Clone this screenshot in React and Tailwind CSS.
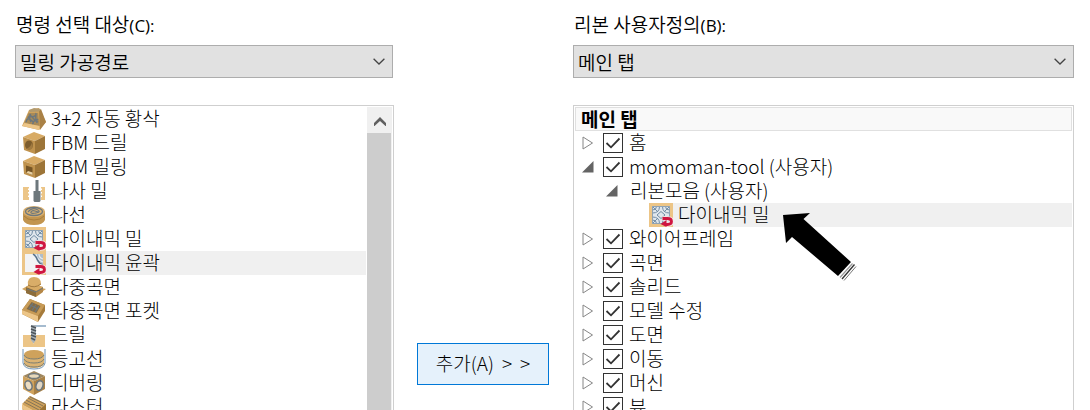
import { useState } from "react";

const TAN = "#cfa25c";
const LIGHT = "#ecc587";
const DARK = "#9c7434";
const STEEL = "#6d777c";

function RedArrow() {
  return (
    <g>
      <path d="M13.500 15.500h5q4 0 4 3t-4 3h-2" fill="none" stroke="#f6e4e4" strokeWidth="4.500" />
      <path d="M13.500 15.500h5q4 0 4 3t-4 3h-2" fill="none" stroke="#cf1640" strokeWidth="2.800" />
      <path d="M17.500 17v7L11.500 21z" fill="#cf1640" />
    </g>
  );
}

const shapes = {
  auto: (
    <g>
      <path d="M7 3l10-2 7 14-7 8-17-4z" fill={TAN} />
      <path d="M17 4l2-2 5 13-6 8z" fill="#a98146" />
      <path d="M7 3l5-2 7 1-2 2.500-9 .5z" fill="#b39a6d" />
      <path d="M6.500 6l9.500 0 1.500 13-15-3z" fill="#a98a57" />
      <path d="M8 7q1 5 6 1M6 11q2-4 5 0t5 1M4 15q1-5 5-2t1 4M11 17q0-5 5-2M8 8q-1 4 1 7M14 6q-1 5 1 10" fill="none" stroke={STEEL} strokeWidth="1.400" />
      <path d="M0 19l2.500-3 15 3v4z" fill={LIGHT} />
    </g>
  ),
  fbmDrill: (
    <g>
      <path d="M1 6l11-5 11 4-10 5z" fill="#d8ab65" />
      <path d="M1 6l12 4v13L2 19z" fill="#bf924d" />
      <path d="M13 10l10-5v13l-10 5z" fill="#9d7538" />
      <ellipse cx="7" cy="14" rx="4" ry="4.600" fill="#7d5d2d" />
      <path d="M4.500 17.500q4-1 5.500-6 1.500 4 0 6.200-2.500 2-5.500-.2z" fill="#a17a3f" />
    </g>
  ),
  fbmMill: (
    <g>
      <path d="M1 6l11-5 11 4-10 5z" fill="#d8ab65" />
      <path d="M1 6l12 4v13L2 19z" fill="#bf924d" />
      <path d="M13 10l10-5v13l-10 5z" fill="#9d7538" />
      <path d="M4 10.500l6.500 2v7.500L4 17.500z" fill="#755526" />
      <path d="M6 16l4.500 1.500V20L4.500 17.800z" fill="#e8d0a2" />
    </g>
  ),
  thread: (
    <g>
      <path d="M1 8h6v1.500H6V11h1v2H6v1.500h1v2H6V18h1v3H1zM23 8h-4v1.500h1V11h-1v2h1v1.500h-1v2h1V18h-1v3h4z" fill={LIGHT} />
      <path d="M13.500 1h3v11h2v10l-1 1h-5l-1-1V12h2z" fill={STEEL} />
    </g>
  ),
  spiral: (
    <g>
      <path d="M1 8v9q2 5 11 5t11-5V8z" fill="#c2954f" />
      <path d="M2 13q3 4 10 4t10-4" fill="none" stroke="#a97d3c" />
      <ellipse cx="12" cy="8.500" rx="11" ry="5.500" fill="#d9b070" />
      <ellipse cx="12" cy="8.500" rx="8.500" ry="4" fill="none" stroke={STEEL} strokeWidth="1.300" />
      <path d="M6 9q4-5 9-2.500t-1 3.500-5-1 4-1 4 1" fill="none" stroke={STEEL} strokeWidth="1.200" />
    </g>
  ),
  dynMill: (
    <g>
      <path d="M0 0h24v24H0z" fill={LIGHT} />
      <path d="M3 3h18v18H3z" fill="#dfe6ec" />
      <g fill="none" stroke="#728da5">
        <path d="M3.500 7q4 0 4-3.500M3.500 10q7 0 7-6.500M20.500 7q-4 0-4-3.500M20.500 10q-7 0-7-6.500M3.500 17q4 0 4 3.500M3.500 14q7 0 7 6.500M20.500 14q-7 0-7 6.500" />
        <path d="M12 8.500l4 3.500-4 3.500L8 12zM3.500 3.500L9 9M20.500 3.500L15 9M3.500 20.500L9 15" />
        <path d="M3.500 3.500h17v17h-17z" stroke="#8fa3b5" />
      </g>
      <RedArrow />
    </g>
  ),
  dynContour: (
    <g>
      <path d="M0 0h24v24H0z" fill={LIGHT} />
      <path d="M3 3h18v18H3z" fill="#f2f3f5" />
      <path d="M11 3h10v11q-4-1-6-4-1-4-4-7z" fill="#aebdca" />
      <path d="M14 3q1 6 7 8M17 3q0 4 4 5" fill="none" stroke="#e4eaf0" strokeWidth="1.200" />
      <path d="M11 3q4 3 4.500 6 2 4 5.500 5" fill="none" stroke="#56708a" strokeWidth="1.400" />
      <RedArrow />
    </g>
  ),
  multi: (
    <g>
      <path d="M0 14l7-4 17 4-10 7z" fill={TAN} />
      <path d="M4 12l5-3 12 3v5l-7 5-10-4z" fill="#b48747" />
      <path d="M4 12l10 3v7L4 18z" fill="#8c6d3b" />
      <path d="M4 12l6-3 11 3-7 4z" fill="#d8ab65" />
      <path d="M6 10Q5 2 12 2t7 7q-3 4-7 4-4 0-6-3z" fill="#d9ad68" />
      <path d="M6 10q6 4 13-1" fill="none" stroke="#a37b40" />
      <path d="M5 14l9 3 7-4" fill="none" stroke={STEEL} />
    </g>
  ),
  pocket: (
    <g>
      <path d="M8 0l15 6v6l-7 11L0 15v-4z" fill="#a67b3b" />
      <path d="M8 0l15 6-7 11L0 11z" fill="#c79b57" />
      <path d="M0 11l16 6v6L0 15z" fill={LIGHT} />
      <path d="M9.500 3l9 4-4 7-10-4z" fill="#836b45" />
      <path d="M11 4l-4 6M14 5.500l-4 6M17 7l-4 6M8 6l8 4" stroke={STEEL} strokeWidth="1.200" />
    </g>
  ),
  drill: (
    <g>
      <path d="M1 12h8l2.500 9L14 12h9v12H1z" fill={LIGHT} />
      <path d="M12 3h12" stroke="#7f9ebb" strokeWidth="1.400" />
      <path d="M9 2h5v15l-2.500 3.500L9 17z" fill="#aab2b8" />
      <path d="M9 3l5 2M9 6l5 2M9 9l5 2M9 12l5 2M9 15l4 2" fill="none" stroke="#4e565c" strokeWidth="1.600" />
    </g>
  ),
  contour: (
    <g>
      <path d="M1 2v14q1 6 11 6t11-6V2" fill="none" stroke="#6f93b5" />
      <path d="M2 8v9q2 4 10 4t10-4V8z" fill="#dcb474" />
      <ellipse cx="12" cy="7.500" rx="10" ry="4.500" fill={TAN} />
      <path d="M2 8q2 4 10 4t10-4M2 12q2 4 10 4t10-4M2 16q2 4 10 4t10-4" fill="none" stroke="#7b7e73" />
    </g>
  ),
  deburr: (
    <g>
      <path d="M1 5l11-5 11 5-11 5z" fill="#a0885f" />
      <path d="M1 5l11 5v14L1 18z" fill="#cfa25c" />
      <path d="M12 10l11-5v13l-11 6z" fill="#a98146" />
      <ellipse cx="12" cy="5" rx="5.500" ry="2.400" fill="#e7d8ba" stroke={STEEL} strokeWidth="1.200" />
      <ellipse cx="6.500" cy="14.500" rx="3.400" ry="4.800" transform="rotate(-20 6.500 14.500)" fill="#ecdcc0" stroke={STEEL} strokeWidth="1.600" />
      <ellipse cx="17.500" cy="14.500" rx="3.400" ry="4.800" transform="rotate(20 17.500 14.500)" fill="#e2d6c2" stroke={STEEL} strokeWidth="1.600" />
    </g>
  ),
  raster: (
    <g>
      <path d="M8 1l16 8v6l-9 8L0 14v-3z" fill={DARK} />
      <path d="M8 1l16 8-9 8L0 9z" fill={TAN} />
      <path d="M6 3l15 8M4 5l15 8M2 7l15 8M8 2l15 7" stroke="#857456" />
      <path d="M0 9l15 8v6L0 14z" fill={LIGHT} />
    </g>
  ),
};

function ToolIcon({ name }) {
  return (
    <svg viewBox="0 0 24 24" className="size-6 shrink-0" aria-hidden="true">
      {shapes[name]}
    </svg>
  );
}

const commands = [
  ["auto", "3+2 자동 황삭"],
  ["fbmDrill", "FBM 드릴"],
  ["fbmMill", "FBM 밀링"],
  ["thread", "나사 밀"],
  ["spiral", "나선"],
  ["dynMill", "다이내믹 밀"],
  ["dynContour", "다이내믹 윤곽"],
  ["multi", "다중곡면"],
  ["pocket", "다중곡면 포켓"],
  ["drill", "드릴"],
  ["contour", "등고선"],
  ["deburr", "디버링"],
  ["raster", "라스터"],
];

const tabs = ["와이어프레임", "곡면", "솔리드", "모델 수정", "도면", "이동", "머신", "뷰"];

function Name({ children }) {
  return <span className="block pb-0.5 leading-[22px] whitespace-nowrap">{children}</span>;
}

function SelectField({ id, label, hotkey, value }) {
  return (
    <div className="flex flex-col font-[350]">
      <label htmlFor={id} className="mt-[11px] mb-[9px] h-[25px] pl-px text-[19px] leading-[25px] whitespace-nowrap">
        {label}
        <span className="font-['Open_Sans',sans-serif] text-[17px] font-normal">({hotkey}):</span>
      </label>
      <div className="grid items-center">
        <select
          id={id}
          className="col-start-1 row-start-1 h-[33px] w-full appearance-none border border-[#adadad] bg-[#e1e1e1] pr-8 pl-1 text-[19px] leading-[31px]"
        >
          <option>{value}</option>
        </select>
        <svg viewBox="0 0 12 7" className="pointer-events-none col-start-1 row-start-1 mr-2 h-[7px] w-3 justify-self-end" aria-hidden="true">
          <path d="M.6.8L6 6 11.400.8" fill="none" stroke="#444" strokeWidth="1.300" />
        </svg>
      </div>
    </div>
  );
}

function Expander({ open, name }) {
  return (
    <button type="button" aria-label={name} aria-expanded={open} className="flex h-6 w-3 shrink-0 items-center">
      {open ? (
        <svg viewBox="0 0 12 12" className="size-3">
          <path d="M11.500 0v11.500H0z" fill="#646464" />
        </svg>
      ) : (
        <svg viewBox="0 0 12 16" className="h-4 w-3">
          <path d="M1 2v12l9.500-6z" fill="#fff" stroke="#868686" />
        </svg>
      )}
    </button>
  );
}

function TabRow({ name, open = false }) {
  const [checked, setChecked] = useState(true);
  return (
    <div className="flex h-6 items-center pl-[7px]">
      <Expander open={open} name={name} />
      <label className="ml-[9px] flex items-center gap-1.5">
        <span className="grid size-5">
          <input
            type="checkbox"
            checked={checked}
            onChange={() => setChecked(!checked)}
            className="peer col-start-1 row-start-1 size-5 appearance-none border border-[#333] bg-white"
          />
          <svg viewBox="0 0 20 20" className="pointer-events-none invisible col-start-1 row-start-1 size-5 peer-checked:visible" aria-hidden="true">
            <path d="M3.500 10l4.500 4.300L16.500 5.500" fill="none" stroke="#333" strokeWidth="1.800" />
          </svg>
        </span>
        <Name>{name}</Name>
      </label>
    </div>
  );
}

function Pointer() {
  return (
    <svg viewBox="0 0 76 70" className="absolute top-2 left-[132px] z-10 h-[70px] w-[76px]" aria-hidden="true">
      <path d="M2 4l27-2-6.500 6L70 51 57 65 11 26l-6 6z" fill="#000" />
      <path d="M71.500 52.500L59 66.500" stroke="#999" strokeWidth="1.200" />
      <path d="M73.500 53.500L61 68" stroke="#333" strokeWidth="1.300" />
      <path d="M75 55.500L63 69.500" stroke="#777" />
    </svg>
  );
}

export default function App() {
  return (
    <main className="grid h-screen grid-cols-[378fr_132px_501fr] gap-x-6 overflow-hidden bg-white pr-4 pl-[15px] font-['Noto_Sans_CJK_KR',sans-serif] text-[19px] leading-6 text-black">
      <section className="flex min-h-0 min-w-0 flex-col">
        <SelectField id="source" label="명령 선택 대상" hotkey="C" value="밀링 가공경로" />
        <div className="mt-[27px] -mr-px ml-[3px] flex min-h-0 flex-1 border border-b-0 border-[#cfcfcf] pt-px font-light">
          <ul className="min-w-0 flex-1 overflow-hidden pl-[3px]">
            {commands.map(([icon, name]) => (
              <li key={name} className={icon === "dynContour" ? "flex h-6 items-center gap-[5px] bg-[#f0f0f0]" : "flex h-6 items-center gap-[5px]"}>
                <ToolIcon name={icon} />
                <Name>{name}</Name>
              </li>
            ))}
          </ul>
          <div className="mr-px ml-px flex w-[25px] shrink-0 flex-col bg-[#f0f0f0]">
            <button type="button" aria-label="위로 스크롤" className="flex h-[26px] shrink-0 items-center justify-center">
              <svg viewBox="0 0 12 9" className="mt-0.5 h-[9px] w-3">
                <path d="M0 6L6 0l6 6v3h-.5L6 4 .5 9H0z" fill="#606060" />
              </svg>
            </button>
            <div className="mr-px flex-1 bg-[#cdcdcd]" />
          </div>
        </div>
      </section>

      <div className="pt-[343px]">
        <button type="button" className="flex h-[42px] w-full items-center justify-center gap-2 border border-[#0078d7] bg-[#e5f1fb] font-light">
          <Name>추가(A)</Name>
          <Name>&gt;</Name>
          <Name>&gt;</Name>
        </button>
      </div>

      <section className="flex min-h-0 min-w-0 flex-col">
        <SelectField id="ribbon" label="리본 사용자정의" hotkey="B" value="메인 탭" />
        <div className="mt-[27px] min-h-0 flex-1 overflow-hidden border border-b-0 border-[#cfcfcf] p-px font-light">
          <h2 className="h-6 border border-[#e0e0e0] bg-[#f9f9f9] pl-[5px] font-bold">
            <Name>메인 탭</Name>
          </h2>
          <ul>
            <li>
              <TabRow name="홈" />
            </li>
            <li>
              <TabRow name="momoman-tool (사용자)" open />
              <ul>
                <li>
                  <div className="flex h-6 items-center gap-3 pl-[31px]">
                    <Expander open name="리본모음 (사용자)" />
                    <Name>리본모음 (사용자)</Name>
                  </div>
                  <div className="relative ml-[74px] flex h-6 items-center gap-[5px] bg-[#f0f0f0]">
                    <ToolIcon name="dynMill" />
                    <Name>다이내믹 밀</Name>
                    <Pointer />
                  </div>
                </li>
              </ul>
            </li>
            {tabs.map((name) => (
              <li key={name}>
                <TabRow name={name} />
              </li>
            ))}
          </ul>
        </div>
      </section>
    </main>
  );
}
